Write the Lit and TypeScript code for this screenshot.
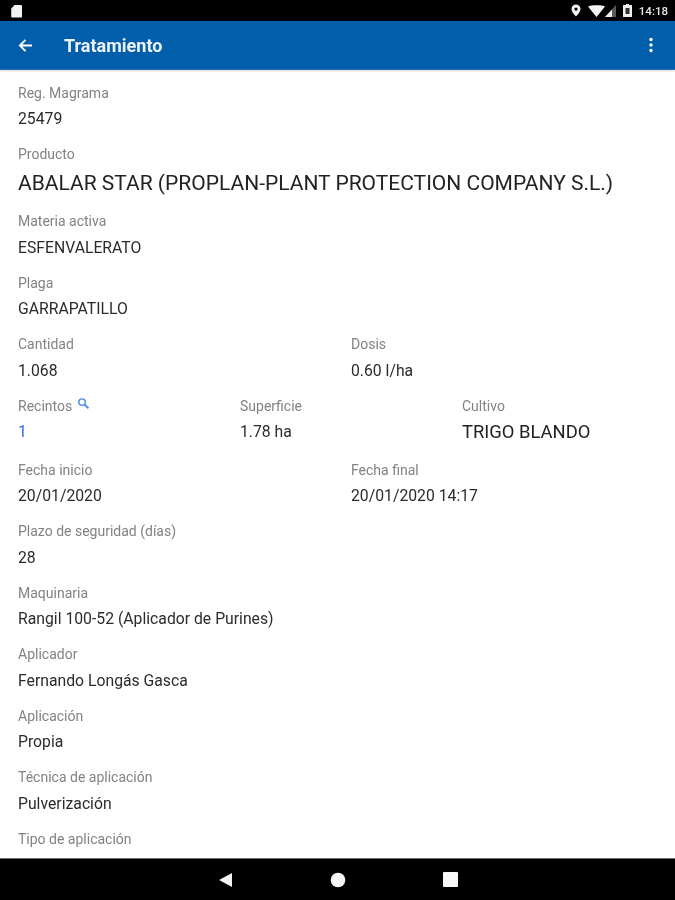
import { LitElement, html, css } from "lit";
import { customElement } from "lit/decorators.js";

type F = { l: string; v: string; size?: "big" | "mid"; link?: boolean; search?: boolean };

const rows: F[][] = [
  [{ l: "Reg. Magrama", v: "25479" }],
  [{ l: "Producto", v: "ABALAR STAR (PROPLAN-PLANT PROTECTION COMPANY S.L.)", size: "big" }],
  [{ l: "Materia activa", v: "ESFENVALERATO" }],
  [{ l: "Plaga", v: "GARRAPATILLO" }],
  [{ l: "Cantidad", v: "1.068" }, { l: "Dosis", v: "0.60 l/ha" }],
  [
    { l: "Recintos", v: "1", link: true, search: true },
    { l: "Superficie", v: "1.78 ha" },
    { l: "Cultivo", v: "TRIGO BLANDO", size: "mid" },
  ],
  [{ l: "Fecha inicio", v: "20/01/2020" }, { l: "Fecha final", v: "20/01/2020 14:17" }],
  [{ l: "Plazo de seguridad (días)", v: "28" }],
  [{ l: "Maquinaria", v: "Rangil 100-52 (Aplicador de Purines)" }],
  [{ l: "Aplicador", v: "Fernando Longás Gasca" }],
  [{ l: "Aplicación", v: "Propia" }],
  [{ l: "Técnica de aplicación", v: "Pulverización" }],
  [{ l: "Tipo de aplicación", v: "" }],
];

@customElement("app-root")
export class AppRoot extends LitElement {
  static styles = css`
    :host {
      display: flex;
      flex-direction: column;
      width: 675px;
      height: 900px;
      overflow: hidden;
      background: #fff;
      font-family: Roboto, "Liberation Sans", sans-serif;
      filter: blur(0.45px);
    }
    .status {
      flex: 0 0 21px;
      background: #000;
      display: flex;
      align-items: center;
      justify-content: space-between;
      padding: 0 7px 0 11px;
      color: #e8e8e8;
    }
    .status-right {
      display: flex;
      align-items: center;
      gap: 7px;
      font-size: 11.5px;
      font-weight: 500;
    }
    .signal { display: flex; align-items: center; }
    .status svg { display: block; }
    .bar {
      flex: 0 0 49px;
      box-sizing: border-box;
      background: #005eab;
      border-bottom: 1px solid #2a6fb2;
      box-shadow: 0 1px 2px rgba(0, 0, 0, 0.18);
      display: flex;
      align-items: center;
      padding: 0 22px 0 18px;
      color: #fff;
      z-index: 1;
    }
    .bar svg { display: block; }
    .title {
      font-size: 18px;
      font-weight: 700;
      margin-left: 31px;
      flex: 1;
      color: #eef3fa;
    }
    .content {
      flex: 1;
      min-height: 0;
      overflow: hidden;
      padding: 14.5px 0 0 9px;
    }
    .row {
      display: grid;
      width: 666px;
      height: 61.5px;
    }
    .row.tall { height: 67px; }
    .row.mid { height: 64px; }
    .c1 { grid-template-columns: 1fr; }
    .c2 { grid-template-columns: 333px 333px; }
    .c3 { grid-template-columns: 222px 222px 222px; }
    .field { padding-left: 9px; min-width: 0; }
    .label {
      height: 16px;
      line-height: 16px;
      font-size: 14px;
      color: #828282;
      display: flex;
      align-items: center;
      gap: 5px;
      white-space: nowrap;
    }
    .value {
      margin-top: 8.5px;
      height: 20px;
      line-height: 20px;
      font-size: 15.75px;
      color: #2b2b2b;
      white-space: nowrap;
    }
    .value.big {
      margin-top: 8px;
      height: 26px;
      line-height: 26px;
      font-size: 21px;
      color: #222;
    }
    .value.mid {
      font-size: 18.4px;
      color: #222;
    }
    .value.link { color: #2f6fd6; }
    .search { margin-top: -5px; }
    .nav {
      flex: 0 0 42px;
      background: #000;
      border-top: 1px solid #6a6a6a;
      box-sizing: border-box;
      display: flex;
      align-items: center;
      justify-content: center;
      gap: 97px;
    }
    .nav svg { display: block; }
  `;

  private field(f: F) {
    return html`<div class="field">
      <div class="label">
        <span>${f.l}</span>
        ${f.search
          ? html`<svg class="search" width="13" height="13" viewBox="0 0 12 12" fill="none" stroke="#4a8ae4">
              <circle cx="4.700" cy="4.700" r="3" stroke-width="1.300"></circle>
              <path d="M7 7l3.600 3.400" stroke-width="1.700"></path>
            </svg>`
          : ""}
      </div>
      <div class="value ${f.size ?? ""} ${f.link ? "link" : ""}">${f.v}</div>
    </div>`;
  }

  render() {
    return html`
      <div class="status">
        <svg width="11" height="14" viewBox="0 0 11 14" fill="#f2f2f2">
          <path d="M3.500 1H10a1 1 0 0 1 1 1v10.500a1 1 0 0 1-1 1H1.200a1 1 0 0 1-1-1V4.500z"></path>
        </svg>
        <div class="status-right">
          <svg width="10" height="13" viewBox="0 0 10 13" fill="#f0f0f0">
            <path fill-rule="evenodd" d="M5 .5a4.500 4.500 0 0 1 4.500 4.500C9.500 8 5 12.500 5 12.500S.5 8 .5 5A4.500 4.500 0 0 1 5 .5zm0 3a1.600 1.600 0 1 0 0 3.200 1.600 1.600 0 0 0 0-3.200z"></path>
          </svg>
          <span class="signal">
            <svg width="17" height="12" viewBox="0 0 17 12" fill="#f4f4f4"><path d="M0 1.500C2.500-.2 14.500-.2 17 1.500L8.500 12z"></path></svg>
            <svg width="11" height="12" viewBox="0 0 11 12"><path d="M11 0v12H0z" fill="#5a5a5a"></path><path d="M7 4.500V12H0z" fill="#f0f0f0"></path></svg>
          </span>
          <svg width="9" height="13" viewBox="0 0 9 13">
            <path d="M3 0h3v1h2.500a.5.500 0 0 1 .5.500v11a.5.500 0 0 1-.5.500h-8a.5.500 0 0 1-.5-.5v-11A.5.500 0 0 1 .5 1H3z" fill="#f0f0f0"></path>
            <rect x="2.500" y="4" width="4" height="6" fill="#333"></rect>
          </svg>
          <span>14:18</span>
        </div>
      </div>
      <div class="bar">
        <svg width="15" height="15" viewBox="0 0 16 16" fill="none" stroke="#fff" stroke-width="2">
          <path d="M15 8H2.500M8 2 2 8l6 6"></path>
        </svg>
        <div class="title">Tratamiento</div>
        <svg width="4" height="16" viewBox="0 0 4 16" fill="#fff">
          <circle cx="2" cy="2.500" r="1.700"></circle>
          <circle cx="2" cy="8" r="1.700"></circle>
          <circle cx="2" cy="13.500" r="1.700"></circle>
        </svg>
      </div>
      <div class="content">
        ${rows.map(
          (r, i) => html`<div class="row c${r.length} ${i === 1 ? "tall" : i === 5 ? "mid" : ""}">${r.map((f) => this.field(f))}</div>`
        )}
      </div>
      <div class="nav">
        <svg width="15" height="16" viewBox="0 0 15 16" fill="#f4f4f4"><path d="M14 1v14L1 8z"></path></svg>
        <svg width="16" height="16" viewBox="0 0 16 16" fill="#f8f8f8"><circle cx="8" cy="8" r="7.300"></circle></svg>
        <svg width="15" height="15" viewBox="0 0 15 15" fill="#f8f8f8"><rect width="15" height="15" rx="1"></rect></svg>
      </div>
    `;
  }
}
